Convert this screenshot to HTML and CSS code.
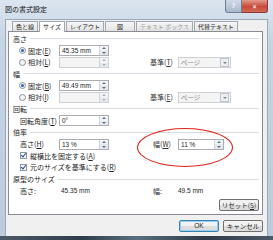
FILE: index.html
```html
<!DOCTYPE html>
<html lang="ja">
<head>
  <meta charset="UTF-8" />
  <title>図の書式設定</title>
  <link rel="stylesheet" href="styles.css">
</head>
<body>
  <div class="window">
    <div class="titlebar">
      <span class="title">図の書式設定</span>
      <div class="controls">
        <span class="help">?</span>
        <span class="close">&#x2715;</span>
      </div>
    </div>

    <div class="client">
      <div class="tabs">
        <span class="tab">色と線</span>
        <span class="tab active">サイズ</span>
        <span class="tab">レイアウト</span>
        <span class="tab pic">図</span>
        <span class="tab off">テキスト ボックス</span>
        <span class="tab">代替テキスト</span>
      </div>

      <div class="panel">
        <div class="group">高さ</div>
        <div class="row">
          <span class="radio on"></span><span class="lbl">固定(<u>E</u>)</span>
          <span class="spin"><span class="val">45.35 mm</span><span class="arrows"></span></span>
        </div>
        <div class="row">
          <span class="radio"></span><span class="lbl">相対(<u>L</u>)</span>
          <span class="spin off"><span class="val"></span><span class="arrows"></span></span>
          <span class="rlbl">基準(<u>T</u>)</span>
          <span class="select"><span class="val">ページ</span><span class="drop"></span></span>
        </div>

        <div class="group">幅</div>
        <div class="row">
          <span class="radio on"></span><span class="lbl">固定(<u>B</u>)</span>
          <span class="spin"><span class="val">49.49 mm</span><span class="arrows"></span></span>
        </div>
        <div class="row">
          <span class="radio"></span><span class="lbl">相対(<u>I</u>)</span>
          <span class="spin off"><span class="val"></span><span class="arrows"></span></span>
          <span class="rlbl">基準(<u>E</u>)</span>
          <span class="select"><span class="val">ページ</span><span class="drop"></span></span>
        </div>

        <div class="group">回転</div>
        <div class="row">
          <span class="lbl wide">回転角度(<u>T</u>)</span>
          <span class="spin"><span class="val">0°</span><span class="arrows"></span></span>
        </div>

        <div class="group">倍率</div>
        <div class="row scale">
          <span class="lbl wide">高さ(<u>H</u>)</span>
          <span class="spin"><span class="val">13 %</span><span class="arrows"></span></span>
          <span class="rlbl">幅(<u>W</u>)</span>
          <span class="spin short"><span class="val">11 %</span><span class="arrows"></span></span>
          <span class="mark"></span>
        </div>
        <div class="row check">
          <span class="box"></span><span>縦横比を固定する(<u>A</u>)</span>
        </div>
        <div class="row check">
          <span class="box"></span><span>元のサイズを基準にする(<u>R</u>)</span>
        </div>

        <div class="group">原型のサイズ</div>
        <div class="row orig">
          <span class="lbl wide">高さ:</span>
          <span class="num">45.35 mm</span>
          <span class="rlbl">幅:</span>
          <span class="num">49.5 mm</span>
        </div>
        <div class="reset-row">
          <span class="button">リセット(<u>S</u>)</span>
        </div>
      </div>

      <div class="footer">
        <span class="button default">OK</span>
        <span class="button">キャンセル</span>
      </div>
    </div>
    <div class="bottom"></div>
  </div>
</body>
</html>
```

FILE: styles.css
```css
body {
  margin: 0;
  padding: 0;
  font-family: "Noto Sans CJK JP", "Noto Sans", sans-serif;
  font-size: 7px;
  color: #1e1e1e;
  background: #c4d3e3;
}
.window {
  width: 273px;
  height: 240px;
  background: linear-gradient(#dbe5ef, #c6d5e5 40px, #bccbdc);
  display: flex;
  flex-direction: column;
  overflow: hidden;
}
.titlebar {
  height: 19px;
  display: flex;
  align-items: flex-start;
  padding-left: 5px;
  flex-shrink: 0;
}
.title {
  font-size: 7px;
  margin-top: 4px;
  color: #111;
}
.controls {
  margin-left: auto;
  margin-right: 5px;
  display: flex;
}
.help, .close {
  height: 12px;
  display: flex;
  align-items: center;
  justify-content: center;
  color: #fff;
  font-family: "DejaVu Sans", sans-serif;
  font-weight: bold;
  border: 1px solid #6d7f95;
  border-top: none;
}
.help {
  width: 15px;
  font-size: 7px;
  background: linear-gradient(#cfdae6, #a9b9cb);
  border-radius: 0 0 0 3px;
  color: #eef2f7;
}
.close {
  width: 25px;
  font-size: 6px;
  background: linear-gradient(#e39a8e, #c8483a 55%, #d06a55);
  border-left: none;
  border-color: #8a3a32;
  border-radius: 0 0 3px 0;
}
.client {
  flex: 1;
  margin: 0 5px;
  background: #f0f0f0;
  border: 1px solid #9aa8b8;
  border-bottom: none;
  padding: 1px 4px 0 2px;
  display: flex;
  flex-direction: column;
  min-width: 0;
}
.tabs {
  display: flex;
  height: 10px;
  margin-left: 4px;
  align-items: flex-end;
  flex-shrink: 0;
}
.tab {
  height: 9px;
  line-height: 9px;
  padding: 0 3px;
  min-width: 18px;
  text-align: center;
  font-size: 6px;
  border: 1px solid #a3a7b0;
  border-bottom: none;
  margin-right: 1px;
  background: linear-gradient(#f6f6f6, #e3e3e3);
  white-space: nowrap;
}
.tab.active {
  height: 10px;
  background: #fff;
  position: relative;
  z-index: 1;
  margin-bottom: -1px;
}
.tab.pic {
  min-width: 22px;
}
.tab.off {
  color: #9a9a9a;
}
.panel {
  box-sizing: border-box;
  background: #fff;
  border: 1px solid #898c95;
  height: 184px;
  padding: 1px 3px 0 3px;
  display: flex;
  flex-direction: column;
  flex-shrink: 0;
}
.group {
  height: 11.7px;
  display: flex;
  align-items: center;
  gap: 3px;
  padding-left: 1px;
  white-space: nowrap;
}
.group::after {
  content: "";
  flex: 1;
  height: 1px;
  background: #d9dde3;
}
.row {
  height: 11.7px;
  display: flex;
  align-items: center;
  padding-left: 7px;
  position: relative;
  white-space: nowrap;
}
.radio {
  width: 5px;
  height: 5px;
  border: 1px solid #8a939e;
  border-radius: 50%;
  background: #f4f4f4;
  margin-right: 2px;
  position: relative;
}
.radio.on::after {
  content: "";
  position: absolute;
  left: 1px;
  top: 1px;
  width: 3px;
  height: 3px;
  border-radius: 50%;
  background: #2b63b8;
}
.lbl {
  width: 31px;
}
.lbl.wide {
  width: 39px;
  padding-left: 1px;
}
u {
  text-decoration: underline;
}
.spin, .select {
  height: 9px;
  border: 1px solid #abadb3;
  display: flex;
  align-items: center;
  background: #fff;
}
.spin {
  width: 48px;
}
.spin.short {
  width: 44px;
}
.val {
  flex: 1;
  padding-left: 2px;
  font-size: 6.5px;
  font-family: "Liberation Sans", sans-serif;
  white-space: nowrap;
}
.select .val {
  font-family: "Noto Sans CJK JP", sans-serif;
  color: #8a8a8a;
}
.arrows {
  width: 8px;
  height: 9px;
  border-left: 1px solid #d0d4da;
  background: linear-gradient(#f3f5f8 50%, #e6eaef 50%);
  position: relative;
}
.arrows::before, .arrows::after {
  content: "";
  position: absolute;
  left: 2px;
  border-left: 2px solid transparent;
  border-right: 2px solid transparent;
}
.arrows::before {
  top: 1px;
  border-bottom: 2px solid #5a6d86;
}
.arrows::after {
  bottom: 1px;
  border-top: 2px solid #5a6d86;
}
.spin.off, .select {
  background: #f4f4f4;
  border-color: #cdd0d5;
}
.spin.off .arrows::before {
  border-bottom-color: #a9b1bb;
}
.spin.off .arrows::after {
  border-top-color: #a9b1bb;
}
.rlbl {
  margin-left: 41px;
  width: 28px;
  color: #333;
}
.scale .rlbl, .orig .rlbl {
  margin-left: 44px;
  width: 25px;
}
.select {
  width: 51px;
}
.drop {
  width: 7px;
  height: 7px;
  margin-right: 1px;
  border: 1px solid #c2c6cc;
  background: #eceef1;
  position: relative;
}
.drop::after {
  content: "";
  position: absolute;
  left: 1.5px;
  top: 3px;
  border-left: 2px solid transparent;
  border-right: 2px solid transparent;
  border-top: 2px solid #7c8694;
}
.mark {
  position: absolute;
  left: 125px;
  top: -10px;
  width: 94px;
  height: 37px;
  border: 1.5px solid #e0231c;
  border-radius: 50%;
}
.check {
  padding-left: 8px;
}
.box {
  width: 5px;
  height: 5px;
  border: 1px solid #8e97a3;
  background: #f4f6f8;
  margin-right: 3px;
  position: relative;
}
.box::after {
  content: "";
  position: absolute;
  left: 1px;
  top: -1px;
  width: 2px;
  height: 4px;
  border-right: 1px solid #2a4c86;
  border-bottom: 1px solid #2a4c86;
  transform: rotate(40deg);
}
.num {
  width: 48px;
  font-family: "Liberation Sans", sans-serif;
  font-size: 6.5px;
  padding-left: 2px;
}
.orig .rlbl + .num {
  width: auto;
  padding-left: 0;
}
.reset-row {
  display: flex;
  justify-content: flex-end;
  margin-top: 2px;
}
.button {
  box-sizing: border-box;
  width: 40px;
  height: 12px;
  line-height: 10px;
  border: 1px solid #707070;
  border-radius: 2px;
  background: linear-gradient(#f2f2f2 50%, #dddddd 50%);
  text-align: center;
  font-size: 6.5px;
  white-space: nowrap;
}
.footer {
  height: 21px;
  display: flex;
  justify-content: flex-end;
  align-items: center;
  gap: 4px;
  flex-shrink: 0;
}
.button.default {
  border-color: #3c7fb1;
  box-shadow: inset 0 0 0 1px #8fd0f3;
  font-family: "Liberation Sans", sans-serif;
}
.bottom {
  height: 4px;
  flex-shrink: 0;
  background: linear-gradient(90deg, #4c5966, #2e3c4c 30%, #5a7080 50%, #2e3a48 75%, #4d5a68);
}
```
